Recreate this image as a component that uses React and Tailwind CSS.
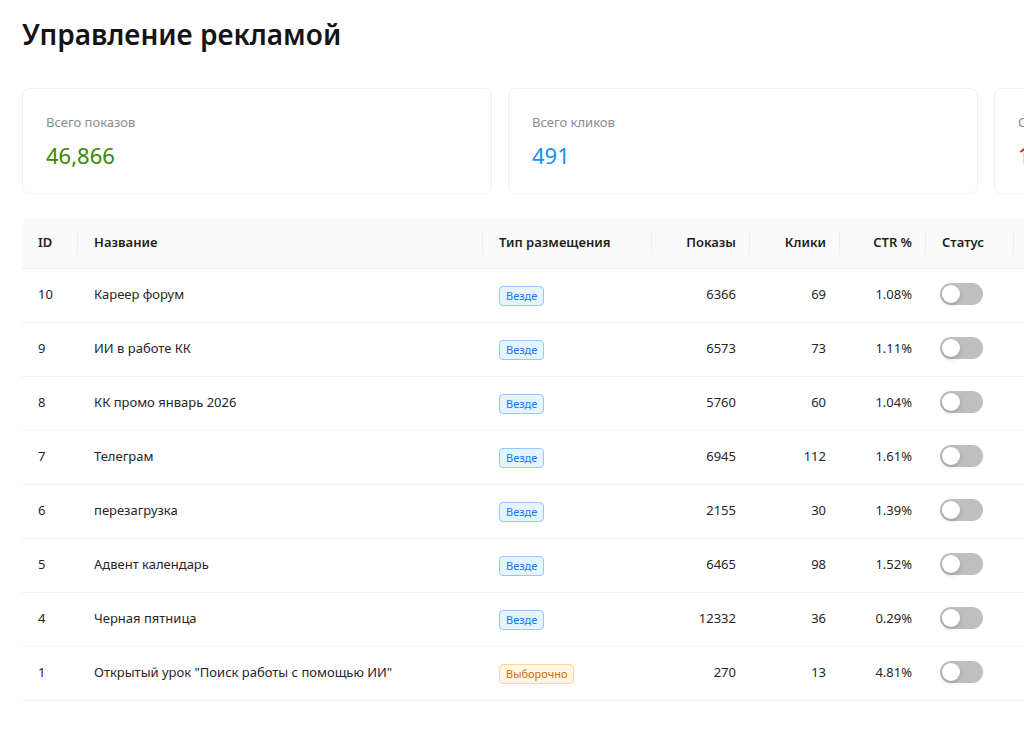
import React from "react";

const rows = [
  { id: 10, name: "Кареер форум", type: "all", shows: 6366, clicks: 69, ctr: "1.08%" },
  { id: 9, name: "ИИ в работе КК", type: "all", shows: 6573, clicks: 73, ctr: "1.11%" },
  { id: 8, name: "КК промо январь 2026", type: "all", shows: 5760, clicks: 60, ctr: "1.04%" },
  { id: 7, name: "Телеграм", type: "all", shows: 6945, clicks: 112, ctr: "1.61%" },
  { id: 6, name: "перезагрузка", type: "all", shows: 2155, clicks: 30, ctr: "1.39%" },
  { id: 5, name: "Адвент календарь", type: "all", shows: 6465, clicks: 98, ctr: "1.52%" },
  { id: 4, name: "Черная пятница", type: "all", shows: 12332, clicks: 36, ctr: "0.29%" },
  { id: 1, name: 'Открытый урок "Поиск работы с помощью ИИ"', type: "sel", shows: 270, clicks: 13, ctr: "4.81%" },
];

const sep =
  "relative after:content-[''] after:absolute after:right-0 after:top-1/2 after:-translate-y-1/2 after:h-[22px] after:w-px after:bg-[#f0f0f0]";

function Stat({ title, value, color }) {
  return (
    <div className="flex-1 rounded-lg border border-[#f0f0f0] bg-white px-[23px] pt-[23px] h-[106px]">
      <div className="text-[13px] leading-[20px] text-[#8c8c8c]">{title}</div>
      <div className={`mt-[8px] text-[22px] leading-[30px] ${color}`}>{value}</div>
    </div>
  );
}

function Tag({ type }) {
  if (type === "sel")
    return (
      <span className="inline-block rounded-[4px] border border-[#ffd591] bg-[#fff7e6] px-[6px] text-[11px] leading-[18px] text-[#d46b08]">
        Выборочно
      </span>
    );
  return (
    <span className="inline-block rounded-[4px] border border-[#91caff] bg-[#e6f4ff] px-[6px] text-[11px] leading-[18px] text-[#1677ff]">
      Везде
    </span>
  );
}

function Switch() {
  return (
    <span className="inline-flex h-[22px] w-[43px] items-center rounded-full bg-[#bfbfbf] p-[2px]">
      <span className="h-[18px] w-[18px] rounded-full bg-white shadow-[0_2px_4px_rgba(0,35,11,0.2)]" />
    </span>
  );
}

export default function App() {
  return (
    <div className="w-full overflow-hidden bg-white" style={{ fontFamily: '"Noto Sans", "Open Sans", sans-serif' }}>
      <div className="w-[1486px] px-[22px] pt-[12px] text-[#1f1f1f]">
        <h1 className="text-[28px] font-semibold leading-[44px] text-[#141414]">Управление рекламой</h1>
        <div className="mt-[32px] flex gap-[16px]">
          <Stat title="Всего показов" value="46,866" color="text-[#3f8600]" />
          <Stat title="Всего кликов" value="491" color="text-[#1890ff]" />
          <Stat title="Средний CTR" value="1.05%" color="text-[#cf1322]" />
        </div>
        <table className="mt-[24px] w-full table-fixed border-collapse text-[13px]">
          <colgroup>
            <col className="w-[56px]" />
            <col className="w-[405px]" />
            <col className="w-[169px]" />
            <col className="w-[98px]" />
            <col className="w-[90px]" />
            <col className="w-[86px]" />
            <col className="w-[88px]" />
            <col />
          </colgroup>
          <thead>
            <tr className="h-[50px] bg-[#fafafa] text-left font-semibold text-[#1f1f1f]">
              <th className={`rounded-tl-lg border-b border-[#f0f0f0] px-[16px] font-semibold ${sep}`}>ID</th>
              <th className={`border-b border-[#f0f0f0] px-[16px] font-semibold ${sep}`}>Название</th>
              <th className={`border-b border-[#f0f0f0] px-[16px] font-semibold ${sep}`}>Тип размещения</th>
              <th className={`border-b border-[#f0f0f0] px-[14px] text-right font-semibold ${sep}`}>Показы</th>
              <th className={`border-b border-[#f0f0f0] px-[14px] text-right font-semibold ${sep}`}>Клики</th>
              <th className={`border-b border-[#f0f0f0] px-[14px] text-right font-semibold ${sep}`}>CTR %</th>
              <th className={`border-b border-[#f0f0f0] px-[16px] font-semibold ${sep}`}>Статус</th>
              <th className="rounded-tr-lg border-b border-[#f0f0f0] px-[16px] font-semibold">Действия</th>
            </tr>
          </thead>
          <tbody>
            {rows.map((r) => (
              <tr key={r.id} className="h-[54px] border-b border-[#f0f0f0] text-[#262626]">
                <td className="px-[16px]">{r.id}</td>
                <td className="px-[16px]">{r.name}</td>
                <td className="px-[16px] pt-[2px]">
                  <Tag type={r.type} />
                </td>
                <td className="px-[14px] text-right">{r.shows}</td>
                <td className="px-[14px] text-right">{r.clicks}</td>
                <td className="px-[14px] text-right">{r.ctr}</td>
                <td className="px-[14px] pt-[2px]">
                  <Switch />
                </td>
                <td className="px-[16px]"></td>
              </tr>
            ))}
          </tbody>
        </table>
      </div>
    </div>
  );
}
